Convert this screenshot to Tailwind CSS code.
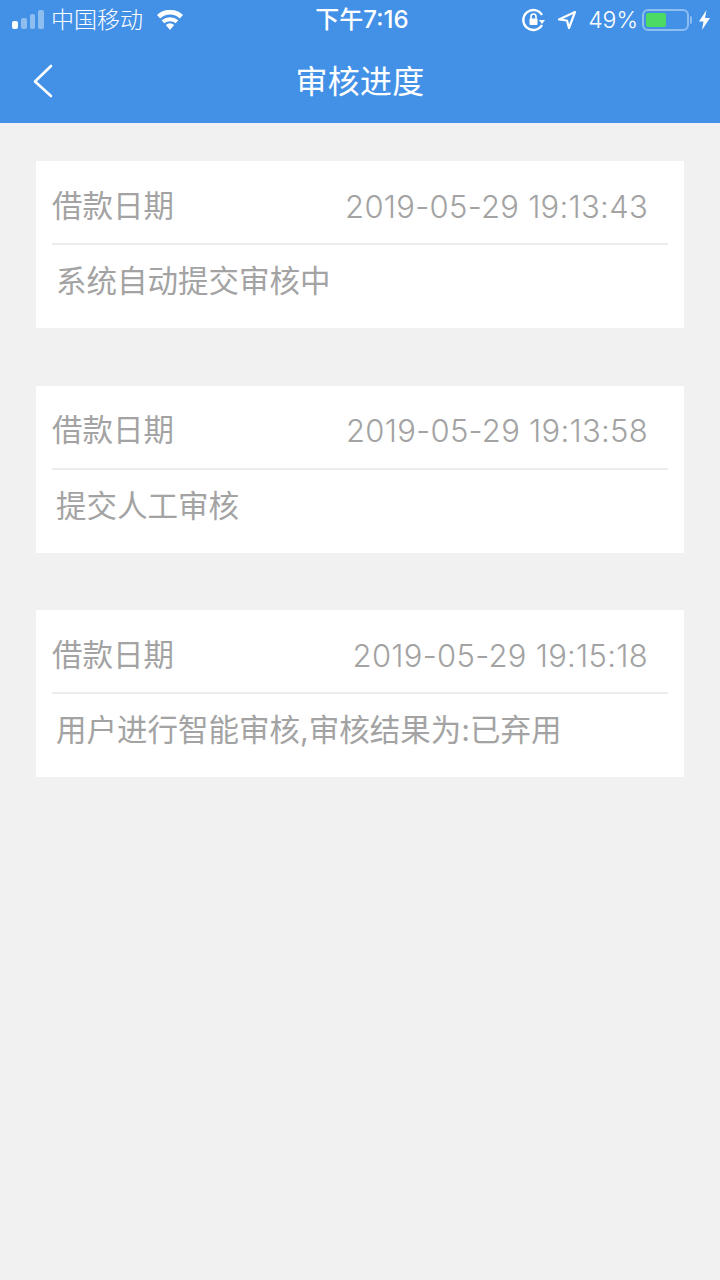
<!DOCTYPE html>
<html lang="zh">
<head>
    <meta charset="UTF-8">
    <meta name="viewport" content="width=device-width, initial-scale=1.0">
    <title>审核进度</title>
    <script src="https://cdn.jsdelivr.net/npm/@tailwindcss/browser@4"></script>
</head>
<body class="bg-[#f1f1f1] font-['Inter','Noto_Sans_CJK_SC',sans-serif] h-[1280px] overflow-hidden">
    <!-- Header -->
    <div class="bg-[#4391e7] h-[123px] text-white">
        <!-- Status bar -->
        <div class="flex items-center h-[40px] relative">
            <div class="flex items-end gap-[3px] ml-[12px] w-[32px] h-[20px] pb-[1px]">
                <span class="w-[6px] h-[8px] rounded-[2px] bg-white"></span>
                <span class="w-[6px] h-[11px] rounded-[2px] bg-white/40"></span>
                <span class="w-[6px] h-[15px] rounded-[2px] bg-white/40"></span>
                <span class="w-[6px] h-[19px] rounded-[2px] bg-white/40"></span>
            </div>
            <span class="ml-[7px] text-[23px] leading-none font-light">中国移动</span>
            <svg class="ml-[13px]" width="28" height="20" viewBox="0 0 28 20" fill="white">
                <path d="M14 20l-4.2-5a6.5 6.5 0 0 1 8.4 0z"/>
                <path d="M8.3 13.2l-2.6-3a13 13 0 0 1 16.6 0l-2.6 3a9 9 0 0 0-11.4 0z"/>
                <path d="M4.2 8.4L1 5a19 19 0 0 1 26 0l-3.2 3.4a14.5 14.5 0 0 0-19.6 0z"/>
            </svg>
            <span class="absolute left-0 right-0 pl-[4px] text-center text-[24px] leading-none font-medium">下午7:16</span>
            <div class="ml-auto flex items-center relative">
                <svg width="24" height="24" viewBox="0 0 24 24" fill="none" stroke="white" stroke-width="2.4" class="mr-[11px]">
                    <path d="M20 7A10 10 0 1 0 20 17"/>
                    <path d="M17 12h6l-3 4z" fill="white" stroke="none"/>
                    <rect x="7.5" y="10.5" width="8" height="6.5" rx="1" fill="white" stroke="none"/>
                    <path d="M9 11V8.5a2.5 2.5 0 0 1 5 0V11" stroke-width="1.6"/>
                </svg>
                <svg width="20" height="20" viewBox="0 0 20 20" fill="none" stroke="white" stroke-width="2.2" stroke-linejoin="round" class="mr-[11px]">
                    <path d="M18 2L2 9.5l8 1 2 7.5z"/>
                </svg>
                <span class="text-[23px] leading-none mr-[4px] font-light">49%</span>
                <div class="w-[47px] h-[22px] rounded-[6px] border-2 border-white/40 p-[2px]">
                    <div class="w-[20px] h-full bg-[#4cd964] rounded-[2px]"></div>
                </div>
                <span class="w-[2px] h-[8px] bg-white/40 ml-[1px] rounded-r-[2px]"></span>
                <svg width="11" height="20" viewBox="0 0 11 20" fill="white" class="ml-[7px] mr-[10px]">
                    <path d="M7.5 0L0 11.5h4.5L3 20l8-12H6z"/>
                </svg>
            </div>
        </div>
        <!-- Title bar -->
        <div class="relative flex items-center justify-center h-[83px]">
            <svg class="absolute left-[33px] top-[24px]" width="20" height="34" viewBox="0 0 20 34" fill="none" stroke="white" stroke-width="2.6" stroke-linecap="round" stroke-linejoin="round">
                <path d="M18 2L2 17.5 18 32"/>
            </svg>
            <span class="text-[32px] leading-none tracking-[0.2px]">审核进度</span>
        </div>
    </div>

    <!-- Records -->
    <div class="flex flex-col gap-[57.5px] mx-[36px] mt-[38px] text-[#a3a3a3]">
        <div class="bg-white h-[167px] px-[16px]">
            <div class="flex items-center justify-between h-[84px] pt-[8px] border-b-2 border-[#ececec]">
                <span class="text-[30.5px] leading-none">借款日期</span>
                <span class="text-[31px] leading-none tracking-[0.28px] mr-[20px] font-light">2019-05-29 19:13:43</span>
            </div>
            <div class="pl-[4px] pt-[21px] text-[30.5px] leading-none">系统自动提交审核中</div>
        </div>
        <div class="bg-white h-[167px] px-[16px]">
            <div class="flex items-center justify-between h-[84px] pt-[8px] border-b-2 border-[#ececec]">
                <span class="text-[30.5px] leading-none">借款日期</span>
                <span class="text-[31px] leading-none tracking-[0.28px] mr-[20px] font-light">2019-05-29 19:13:58</span>
            </div>
            <div class="pl-[4px] pt-[21px] text-[30.5px] leading-none">提交人工审核</div>
        </div>
        <div class="bg-white h-[167px] px-[16px]">
            <div class="flex items-center justify-between h-[84px] pt-[8px] border-b-2 border-[#ececec]">
                <span class="text-[30.5px] leading-none">借款日期</span>
                <span class="text-[31px] leading-none tracking-[0.28px] mr-[20px] font-light">2019-05-29 19:15:18</span>
            </div>
            <div class="pl-[4px] pt-[21px] text-[30.5px] leading-none">用户进行智能审核,审核结果为:已弃用</div>
        </div>
    </div>
</body>
</html>
